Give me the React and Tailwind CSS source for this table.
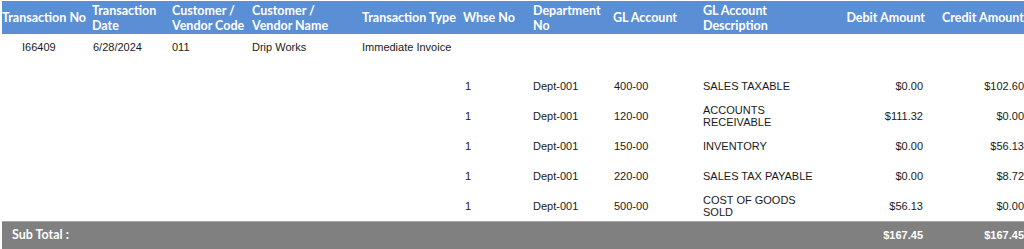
import React from 'react';

const cols = [90, 80, 80, 110, 101, 70, 80, 90, 130, 94, 97];

const lines = [
  { whse: '1', dept: 'Dept-001', gl: '400-00', desc: 'SALES TAXABLE', debit: '$0.00', credit: '$102.60' },
  { whse: '1', dept: 'Dept-001', gl: '120-00', desc: 'ACCOUNTS RECEIVABLE', debit: '$111.32', credit: '$0.00' },
  { whse: '1', dept: 'Dept-001', gl: '150-00', desc: 'INVENTORY', debit: '$0.00', credit: '$56.13' },
  { whse: '1', dept: 'Dept-001', gl: '220-00', desc: 'SALES TAX PAYABLE', debit: '$0.00', credit: '$8.72' },
  { whse: '1', dept: 'Dept-001', gl: '500-00', desc: 'COST OF GOODS SOLD', debit: '$56.13', credit: '$0.00' },
];

// header labels, split where the report wraps them
const headers = [
  { lines: ['Transaction No'] },
  { lines: ['Transaction', 'Date'] },
  { lines: ['Customer /', 'Vendor Code'] },
  { lines: ['Customer /', 'Vendor Name'] },
  { lines: ['Transaction Type'] },
  { lines: ['Whse No'] },
  { lines: ['Department', 'No'] },
  { lines: ['GL Account'] },
  { lines: ['GL Account', 'Description'] },
  { lines: ['Debit Amount'], right: true, pad: true },
  { lines: ['Credit Amount'], right: true },
];

export default function App() {
  return (
    <div className="w-[1024px] h-[249px] overflow-hidden bg-white pt-[1px] pl-[2px]">
      <table className="table-fixed border-collapse w-[1020px] text-[11px] text-[#1a1a1a] font-['Liberation_Sans',Arial,sans-serif]">
        <colgroup>
          {cols.map((w, i) => (
            <col key={i} style={{ width: w }} />
          ))}
        </colgroup>
        <thead>
          <tr className="bg-[#5b8fd5] h-[33px]">
            {headers.map((h, i) => (
              <th
                key={i}
                className={`font-['Lato',sans-serif] font-bold text-[12.5px] leading-[15px] text-white align-middle px-0 whitespace-nowrap overflow-hidden ${h.right ? 'text-right' : 'text-left'} ${h.pad ? 'pr-[2px]' : ''}`}
              >
                {h.lines.map((t, j) => (
                  <div key={j}>{t}</div>
                ))}
              </th>
            ))}
          </tr>
        </thead>
        <tbody>
          <tr className="h-[37px] align-top">
            <td className="pt-[5px] pl-[20px]">I66409</td>
            <td className="pt-[5px] pl-[1px]">6/28/2024</td>
            <td className="pt-[5px]">011</td>
            <td className="pt-[5px]">Drip Works</td>
            <td className="pt-[5px]">Immediate Invoice</td>
            <td colSpan={6}></td>
          </tr>
          {lines.map((l, i) => (
            <tr key={i} className="h-[30px] align-middle leading-[12px]">
              <td colSpan={5}></td>
              <td className="pl-[2px]">{l.whse}</td>
              <td>{l.dept}</td>
              <td className="pl-[1px]">{l.gl}</td>
              <td className="pr-[20px]">{l.desc}</td>
              <td className="text-right pr-[4px]">{l.debit}</td>
              <td className="text-right">{l.credit}</td>
            </tr>
          ))}
          <tr className="h-[28px] bg-[#808080] border-t border-[#a6a6a6] text-white font-bold">
            <td colSpan={9} className="pl-[10px] font-['Lato',sans-serif] text-[12.5px]">Sub Total :</td>
            <td className="text-right pr-[4px]">$167.45</td>
            <td className="text-right">$167.45</td>
          </tr>
        </tbody>
      </table>
    </div>
  );
}
